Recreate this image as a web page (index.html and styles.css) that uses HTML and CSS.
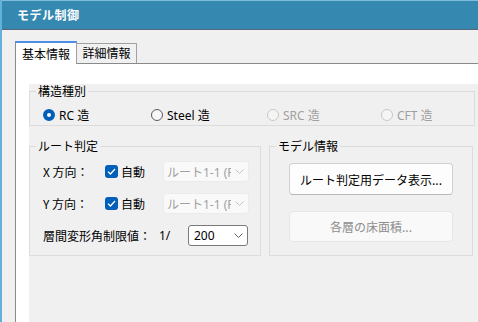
FILE: index.html
```html
<!DOCTYPE html>
<html lang="ja">
<head>
    <meta charset="UTF-8">
    <title>モデル制御</title>
    <link rel="stylesheet" href="styles.css">
</head>
<body>
    <div class="window">
        <div class="titlebar">モデル制御</div>

        <div class="client">
            <div class="tabs">
                <div class="tab active">基本情報</div>
                <div class="tab">詳細情報</div>
            </div>

            <div class="tabpage">
                <div class="panel">
                    <fieldset class="group structure">
                        <legend>構造種別</legend>
                        <div class="radios">
                            <label class="radio"><span class="dot checked"></span>RC 造</label>
                            <label class="radio"><span class="dot"></span>Steel 造</label>
                            <label class="radio disabled"><span class="dot"></span>SRC 造</label>
                            <label class="radio disabled"><span class="dot"></span>CFT 造</label>
                        </div>
                    </fieldset>

                    <div class="lower">
                        <fieldset class="group route">
                            <legend>ルート判定</legend>
                            <div class="row">
                                <span class="label">X 方向：</span>
                                <label class="check"><span class="box"><svg width="9" height="7" viewBox="0 0 9 7"><polyline points="1,3.6 3.4,6 8,1" /></svg></span>自動</label>
                                <div class="combo disabled"><span class="value">ルート1-1 (RC)</span><svg class="chev" width="9" height="5" viewBox="0 0 9 5"><polyline points="0.5,0.5 4.5,4.5 8.5,0.5" /></svg></div>
                            </div>
                            <div class="row">
                                <span class="label">Y 方向：</span>
                                <label class="check"><span class="box"><svg width="9" height="7" viewBox="0 0 9 7"><polyline points="1,3.6 3.4,6 8,1" /></svg></span>自動</label>
                                <div class="combo disabled"><span class="value">ルート1-1 (RC)</span><svg class="chev" width="9" height="5" viewBox="0 0 9 5"><polyline points="0.5,0.5 4.5,4.5 8.5,0.5" /></svg></div>
                            </div>
                            <div class="row">
                                <span class="label wide">層間変形角制限値：</span>
                                <span class="ratio">1/</span>
                                <div class="combo small"><span class="value">200</span><svg class="chev" width="9" height="5" viewBox="0 0 9 5"><polyline points="0.5,0.5 4.5,4.5 8.5,0.5" /></svg></div>
                            </div>
                        </fieldset>

                        <fieldset class="group model">
                            <legend>モデル情報</legend>
                            <button class="btn">ルート判定用データ表示...</button>
                            <button class="btn" disabled>各層の床面積...</button>
                        </fieldset>
                    </div>
                </div>
            </div>
        </div>
    </div>
</body>
</html>
```

FILE: styles.css
```css
html, body {
    margin: 0;
    width: 478px;
    height: 322px;
    overflow: hidden;
    background: #f0f0f0;
    font-family: "Noto Sans", "Noto Sans CJK JP", sans-serif;
    font-size: 12px;
    color: #000;
}

.window {
    height: 322px;
    border-left: 2px solid #62b1dc;
    box-sizing: border-box;
    display: flex;
    flex-direction: column;
}

.titlebar {
    height: 30px;
    line-height: 28px;
    box-sizing: border-box;
    background: #3589b1;
    border-top: 1px solid #7fbddb;
    border-bottom: 1px solid #56687a;
    padding-left: 15px;
    color: #fff;
    font-weight: bold;
    font-family: "Noto Sans CJK JP", sans-serif;
    letter-spacing: 0.5px;
}

.client {
    flex: 1;
    display: flex;
    flex-direction: column;
    padding-top: 11px;
}

.tabs {
    display: flex;
    align-items: flex-end;
    margin-left: 13px;
    position: relative;
    z-index: 1;
}

.tab {
    height: 19px;
    line-height: 18px;
    padding: 0 5px;
    width: 49px;
    text-align: center;
    background: #f0f0f0;
    border: 1px solid #a0a0a0;
    border-left: none;
    border-bottom: none;
    font-family: "Noto Sans CJK JP", sans-serif;
}

.tab.active {
    height: 21px;
    line-height: 22px;
    width: 50px;
    background: #fff;
    border-left: 1px solid #8a8a8a;
    border-top: 2px solid #4c8ee8;
    border-right: 1px solid #a0a0a0;
    margin-bottom: -1px;
}

.tabpage {
    flex: 1;
    display: flex;
    background: #fff;
    border-top: 1px solid #8a8a8a;
    border-left: 1px solid #8a8a8a;
    margin-left: 13px;
    padding: 20px 0 0 13px;
}

.panel {
    flex: 1;
    background: #f0f0f0;
}

.group {
    margin: 0;
    border: 1px solid #dcdcdc;
    padding: 0 6px;
    min-width: 0;
}

.group legend {
    padding: 0 2px;
    margin-left: -7px;
    line-height: 14px;
    font-family: "Noto Sans CJK JP", sans-serif;
}

.structure {
    margin-right: 3px;
    padding: 8px 0 5px 13px;
}

.radios {
    display: grid;
    grid-template-columns: 108px 116px 114px auto;
    height: 14px;
    align-items: center;
}

.radio {
    display: flex;
    align-items: center;
    gap: 4px;
}

.radio.disabled {
    color: #a0a0a0;
}

.dot {
    width: 12px;
    height: 12px;
    box-sizing: border-box;
    border-radius: 50%;
    border: 1px solid #5a5a5a;
    background: #f7f7f7;
}

.radio.disabled .dot {
    border-color: #c8c8c8;
    background: #f5f5f5;
}

.dot.checked {
    border: 4px solid #005fb8;
    background: #fff;
}

.lower {
    display: flex;
    gap: 8px;
    margin-top: 13px;
}

.route {
    width: 232px;
    box-sizing: border-box;
    padding: 8px 10px 9px 13px;
    display: flex;
    flex-direction: column;
    gap: 11px;
}

.row {
    display: flex;
    align-items: center;
    height: 21px;
}

.label {
    width: 62px;
    font-family: "Noto Sans CJK JP", sans-serif;
}

.label.wide {
    width: 116px;
}

.ratio {
    width: 29px;
}

.check {
    width: 58px;
    display: flex;
    align-items: center;
    gap: 3px;
    font-family: "Noto Sans CJK JP", sans-serif;
}

.box {
    width: 13px;
    height: 13px;
    border-radius: 3px;
    background: #005fb8;
    display: flex;
    align-items: center;
    justify-content: center;
}

.box polyline {
    fill: none;
    stroke: #fff;
    stroke-width: 1.3;
}

.combo {
    width: 86px;
    height: 21px;
    box-sizing: border-box;
    border: 1px solid #7a7a7a;
    border-radius: 3px;
    background: #fff;
    display: flex;
    align-items: center;
    padding: 0 4px 0 3px;
    overflow: hidden;
}

.combo .value {
    flex: 1;
    white-space: nowrap;
    overflow: hidden;
}

.combo.disabled {
    border-color: #ebebeb;
    background: #f9f9f9;
    color: #a0a0a0;
}

.combo.disabled .value {
    max-width: 64px;
    flex: none;
    margin-right: auto;
}

.combo.small {
    width: 60px;
    padding-left: 5px;
}

.chev polyline {
    fill: none;
    stroke: #606060;
    stroke-width: 1;
}

.combo.disabled .chev polyline {
    stroke: #c4c4c4;
}

.model {
    width: 204px;
    box-sizing: border-box;
    padding: 10px 0 0 19px;
    display: flex;
    flex-direction: column;
    gap: 16px;
}

.model legend {
    margin-left: -13px;
}

.btn {
    width: 164px;
    height: 32px;
    border: 1px solid #d0d0d0;
    border-bottom-color: #b8b8b8;
    border-radius: 4px;
    background: #fdfdfd;
    font-family: "Noto Sans CJK JP", sans-serif;
    font-size: 12px;
    color: #000;
    padding: 0;
}

.btn:disabled {
    border-color: #e6e6e6;
    background: #f9f9f9;
    color: #8d8d8d;
    height: 31px;
}
```
